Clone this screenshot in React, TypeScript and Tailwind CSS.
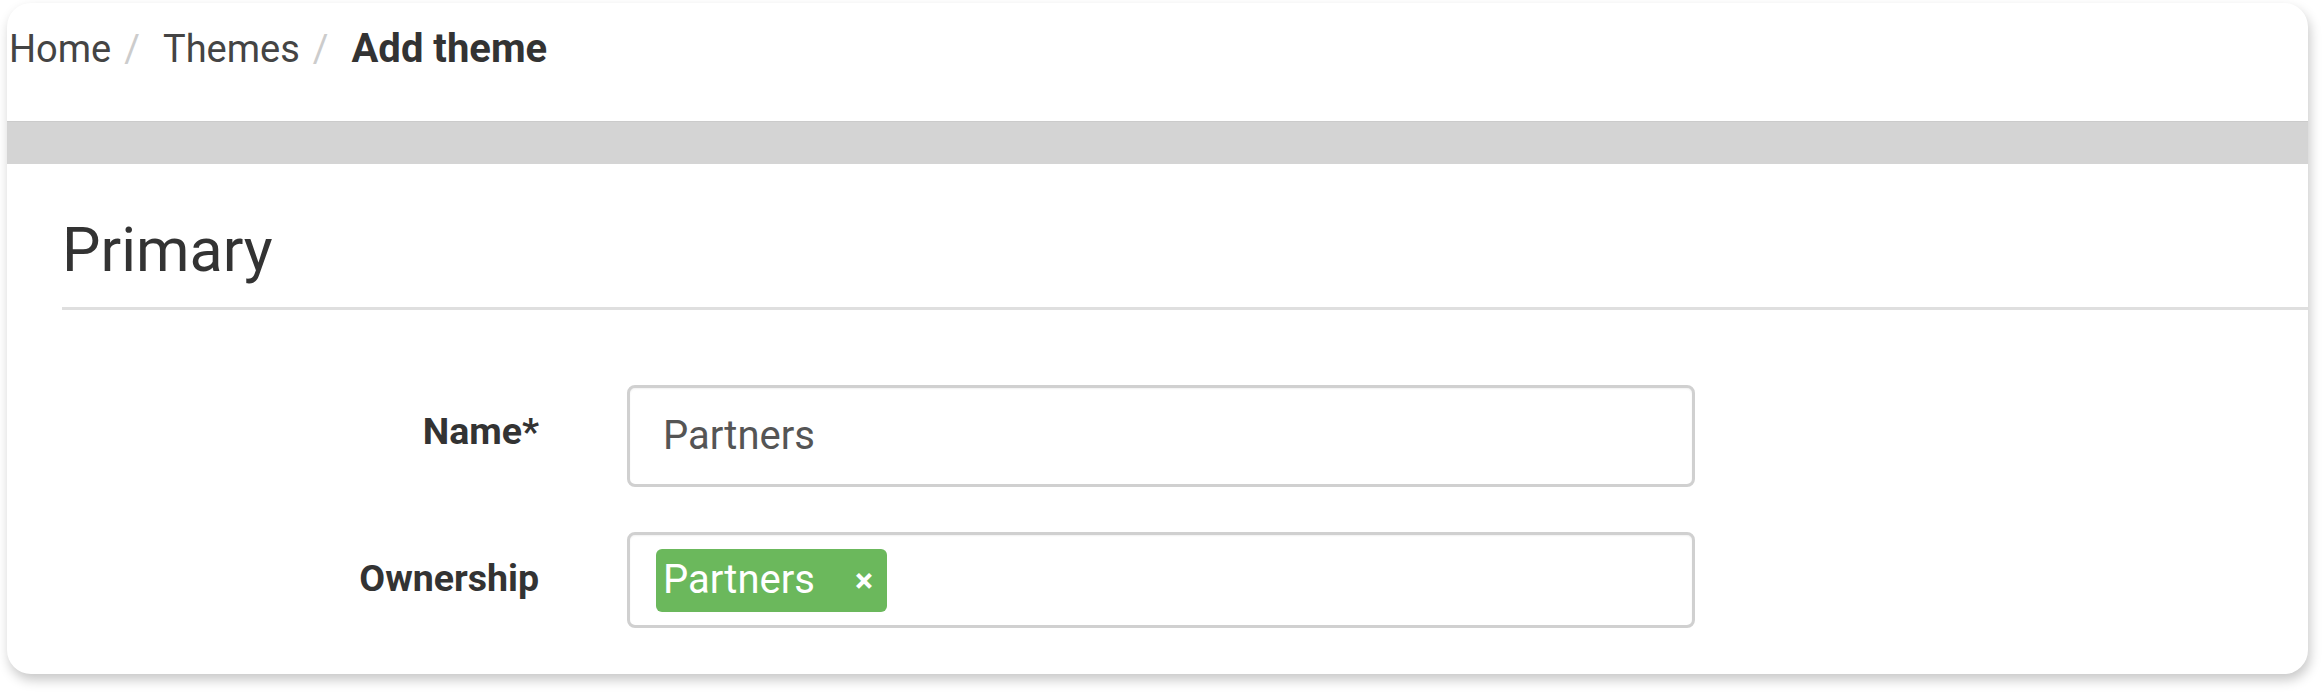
const font = "font-['Roboto','Liberation_Sans',sans-serif]";

function Breadcrumb() {
  return (
    <nav className={`flex items-baseline pl-[2px] pt-[26px] text-[38px] leading-none ${font}`}>
      <span className="text-[#444]">Home</span>
      <span className="ml-[13px] mr-[23px] text-[#ccc]">/</span>
      <span className="text-[#444]">Themes</span>
      <span className="ml-[13px] mr-[23px] text-[#ccc]">/</span>
      <span className="text-[40px] font-bold text-[#333]">Add theme</span>
    </nav>
  );
}

function FormRow({ label, height, children }: { label: string; height: string; children: React.ReactNode }) {
  return (
    <div className="flex items-start">
      <label className={`w-[532px] shrink-0 pt-[28px] text-right text-[37.5px] font-bold leading-none text-[#333] ${font}`}>
        {label}
      </label>
      <div
        className={`ml-[88px] flex w-[1068px] items-center rounded-[8px] border-[3px] border-[#d0d0d0] bg-white shadow-[inset_0_1px_2px_rgba(0,0,0,0.06)] ${height}`}
      >
        {children}
      </div>
    </div>
  );
}

export default function App() {
  return (
    <div className="min-h-screen bg-white pl-[7px] pr-[16px] pt-[3px] pb-[21px]">
      <div className="flex h-[671px] flex-col overflow-hidden rounded-[24px] bg-white shadow-[2px_6px_12px_rgba(0,0,0,0.22)]">
        <header className="h-[118px] shrink-0">
          <Breadcrumb />
        </header>
        <div className="h-[43px] shrink-0 border-t border-[#cbcbcb] bg-[#d4d4d4]" />
        <section className="flex-1 pt-[56px]">
          <div className="ml-[55px] border-b-[3px] border-[#dfdfdf] pb-[26px]">
            <h2 className={`text-[61px] font-normal leading-none text-[#333] ${font}`}>Primary</h2>
          </div>
          <div className="mt-[75px] flex flex-col gap-[45px]">
            <FormRow label="Name*" height="h-[102px]">
              <span className={`pl-[33px] text-[40px] leading-none text-[#555] ${font}`}>Partners</span>
            </FormRow>
            <FormRow label="Ownership" height="h-[96px]">
              <span
                className={`ml-[26px] flex h-[63px] items-center rounded-[6px] bg-[#6bb85c] pl-[7px] pr-[14px] text-white ${font}`}
              >
                <span className="text-[40px] leading-none">Partners</span>
                <span className="ml-[40px] text-[34px] font-bold leading-none">×</span>
              </span>
            </FormRow>
          </div>
        </section>
      </div>
    </div>
  );
}
